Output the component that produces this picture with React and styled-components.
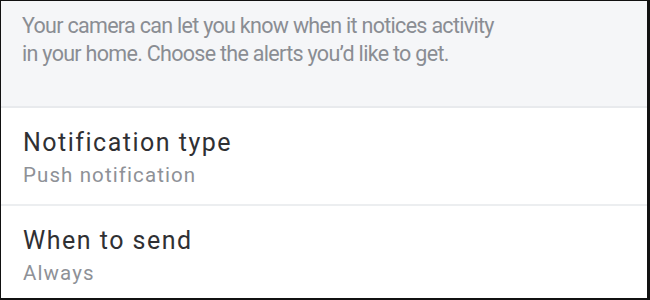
import React from "react";
import styled, { createGlobalStyle } from "styled-components";

const GlobalStyle = createGlobalStyle`
  html, body {
    margin: 0;
    padding: 0;
    background: #000;
  }
  body {
    font-family: Roboto, "Liberation Sans", sans-serif;
  }
`;

const Frame = styled.div`
  width: 650px;
  height: 300px;
  box-sizing: border-box;
  border-style: solid;
  border-color: #111;
  border-width: 1px 3px 2px 1px;
  background: #fff;
  display: flex;
  flex-direction: column;
  overflow: hidden;
`;

const Intro = styled.div`
  height: 107px;
  flex-shrink: 0;
  box-sizing: border-box;
  background: #f5f6f8;
  border-bottom: 2px solid #e8eaed;
  padding: 11px 0 0 21px;
`;

const IntroText = styled.p`
  margin: 0;
  max-width: 485px;
  color: #8a8d93;
  font-size: 21.5px;
  line-height: 28px;
  letter-spacing: -0.7px;
`;

const Row = styled.div`
  height: ${(p) => (p.$last ? "auto" : "98px")};
  flex: ${(p) => (p.$last ? "1" : "0 0 auto")};
  box-sizing: border-box;
  padding: 20px 20px 0 22px;
  border-bottom: ${(p) => (p.$last ? "none" : "2px solid #eceef0")};
  display: flex;
  flex-direction: column;
`;

const Title = styled.div`
  color: #2f3033;
  font-size: 25px;
  line-height: 30px;
  letter-spacing: 1.5px;
`;

const Value = styled.div`
  color: #8e9197;
  font-size: 20.5px;
  line-height: 24px;
  letter-spacing: 1.1px;
  margin-top: 5px;
`;

const rows = [
  { title: "Notification type", value: "Push notification" },
  { title: "When to send", value: "Always", last: true },
];

export default function App() {
  return (
    <>
      <GlobalStyle />
      <Frame>
        <Intro>
          <IntroText>
            Your camera can let you know when it notices activity in your home.
            Choose the alerts you’d like to get.
          </IntroText>
        </Intro>
        {rows.map((r) => (
          <Row key={r.title} $last={r.last}>
            <Title>{r.title}</Title>
            <Value>{r.value}</Value>
          </Row>
        ))}
      </Frame>
    </>
  );
}
